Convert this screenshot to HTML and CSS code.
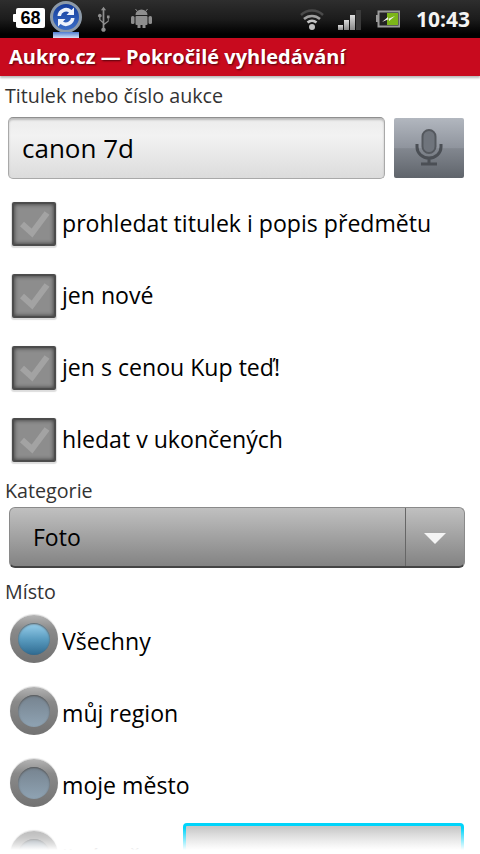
FILE: index.html
```html
<!DOCTYPE html>
<html lang="cs">
<head>
  <meta charset="UTF-8">
  <meta name="viewport" content="width=device-width, initial-scale=1.0">
  <title>Aukro.cz — Pokročilé vyhledávání</title>
  <link rel="stylesheet" href="styles.css">
</head>
<body>

<div class="status">
  <div class="status-left">
    <div class="batt-num">68</div>
    <div class="sync">
      <svg width="36" height="36" viewBox="0 0 36 36">
        <defs>
          <linearGradient id="syncFill" x1="0" y1="0" x2="0" y2="1">
            <stop offset="0" stop-color="#123a9a"/>
            <stop offset="1" stop-color="#3d70c8"/>
          </linearGradient>
        </defs>
        <circle cx="18" cy="17" r="14.500" fill="url(#syncFill)" stroke="#8d9aa8" stroke-width="3"/>
        <path d="M9.500 16a8.500 8.500 0 0 1 14-6l2.500-2.500V15h-7.500l2.500-2.500a5 5 0 0 0-8 3.500z" fill="#eef3fb"/>
        <path d="M26.500 18a8.500 8.500 0 0 1-14 6L10 26.500V19h7.500L15 21.500a5 5 0 0 0 8-3.500z" fill="#eef3fb"/>
      </svg>
      <div class="sync-glow"></div>
    </div>
    <svg class="usb" width="15" height="26" viewBox="0 0 16 30">
      <path d="M8 1l3 4H9v15l4-3v-3h-1v-3h3v3h-1v4l-5 4v3a2.500 2.500 0 1 1-2 0v-5l-4-4v-3a2 2 0 1 1 1.500 0v2.500L7 18V5H5z" fill="#8e8e8e"/>
    </svg>
    <svg class="droid" width="21" height="19" viewBox="0 0 21 19">
      <path d="M4.500 6a6 5.500 0 0 1 12 0z" fill="#8e8e8e"/>
      <path d="M6 2L4.500 0M15 2l1.500-2" stroke="#8e8e8e" stroke-width="1"/>
      <rect x="4.500" y="7" width="12" height="9" rx="1" fill="#8e8e8e"/>
      <rect x="0" y="7" width="3.500" height="8" rx="1.500" fill="#8e8e8e"/>
      <rect x="17.500" y="7" width="3.500" height="8" rx="1.500" fill="#8e8e8e"/>
      <rect x="6.500" y="15" width="3" height="4" fill="#8e8e8e"/>
      <rect x="11.500" y="15" width="3" height="4" fill="#8e8e8e"/>
    </svg>
  </div>
  <div class="status-right">
    <svg class="wifi" width="24" height="22" viewBox="0 0 24 22">
      <path d="M1 7a16 16 0 0 1 22 0" fill="none" stroke="#4a4a4a" stroke-width="2.500"/>
      <path d="M4 11a12 12 0 0 1 16 0" fill="none" stroke="#a0a0a0" stroke-width="2.500"/>
      <path d="M7.500 14.500a7 7 0 0 1 9 0" fill="none" stroke="#c4c4c4" stroke-width="2.500"/>
      <circle cx="12" cy="19" r="3" fill="#c0c0c0"/>
    </svg>
    <div class="bars">
      <i class="b1"></i><i class="b2"></i><i class="b3"></i><i class="b4"></i>
    </div>
    <svg class="charge" width="24" height="18" viewBox="0 0 24 18">
      <rect x="0" y="5" width="2" height="7" fill="#999"/>
      <rect x="2.500" y="1.500" width="21" height="15" fill="#222" stroke="#9a9a9a" stroke-width="2"/>
      <rect x="11" y="3" width="11" height="12" fill="#7cb518"/>
      <path d="M6 12l7-3v2l6-5-7 3V7z" fill="#f2f2f2"/>
    </svg>
    <span class="clock">10:43</span>
  </div>
</div>

<div class="titlebar">Aukro.cz — Pokročilé vyhledávání</div>

<div class="content">
  <div class="label label-first">Titulek nebo číslo aukce</div>
  <div class="search-row">
    <div class="field">canon 7d</div>
    <div class="mic">
      <svg width="30" height="38" viewBox="0 0 30 38">
        <rect x="8.500" y="1" width="13" height="23" rx="6.500" fill="#6f747c" stroke="#54585e" stroke-width="2"/>
        <path d="M3 15v3a12 11 0 0 0 24 0v-3" fill="none" stroke="#4b4f55" stroke-width="3"/>
        <path d="M15 29v5M7 35h16" fill="none" stroke="#4b4f55" stroke-width="3"/>
      </svg>
    </div>
  </div>

  <div class="check-list">
    <div class="check-row">
      <div class="checkbox"><svg width="40" height="40" viewBox="0 0 40 40"><path d="M8 20l10 9L33 9" class="tick"/></svg></div>
      <span>prohledat titulek i popis předmětu</span>
    </div>
    <div class="check-row">
      <div class="checkbox"><svg width="40" height="40" viewBox="0 0 40 40"><path d="M8 20l10 9L33 9" class="tick"/></svg></div>
      <span>jen nové</span>
    </div>
    <div class="check-row">
      <div class="checkbox"><svg width="40" height="40" viewBox="0 0 40 40"><path d="M8 20l10 9L33 9" class="tick"/></svg></div>
      <span>jen s cenou Kup teď!</span>
    </div>
    <div class="check-row">
      <div class="checkbox"><svg width="40" height="40" viewBox="0 0 40 40"><path d="M8 20l10 9L33 9" class="tick"/></svg></div>
      <span>hledat v ukončených</span>
    </div>
  </div>

  <div class="label label-cat">Kategorie</div>
  <div class="spinner">
    <div class="spinner-text">Foto</div>
    <div class="spinner-arrow"><svg width="22" height="11" viewBox="0 0 22 11"><path d="M0 0h22L11 11z" fill="#f4f4f4"/></svg></div>
  </div>

  <div class="label label-place">Místo</div>
  <div class="radio-list">
    <div class="radio-row"><div class="radio radio-on"></div><span>Všechny</span></div>
    <div class="radio-row"><div class="radio"></div><span>můj region</span></div>
    <div class="radio-row"><div class="radio"></div><span>moje město</span></div>
    <div class="radio-row"><div class="radio"></div><span>jiné město</span><div class="city-input"></div></div>
  </div>
</div>

<div class="fade"></div>

</body>
</html>
```

FILE: styles.css
```css
html, body { margin: 0; padding: 0; }
body { width: 480px; height: 854px; overflow: hidden; position: relative; background: #fff; font-family: "Open Sans", "Noto Sans", sans-serif; color: #000; }

.status { height: 38px; display: flex; justify-content: space-between; background: linear-gradient(#2e2e2e, #1c1c1c 50%, #000 90%); }
.status-left { display: flex; align-items: flex-start; padding-left: 16px; }
.status-right { display: flex; align-items: flex-start; padding-right: 10px; }
.batt-num { width: 29px; height: 20px; margin-top: 8px; position: relative; background: #fff; border-radius: 2px; font: bold 18px/20px "Liberation Sans", sans-serif; text-align: center; color: #000; }
.batt-num::before { content: ""; position: absolute; left: -3px; top: 6px; width: 3px; height: 8px; background: #fff; border-radius: 1px 0 0 1px; }
.sync { width: 36px; height: 38px; margin-left: 3px; position: relative; }
.sync svg { display: block; }
.sync-glow { position: absolute; left: 5px; right: 5px; top: 32px; bottom: 0; background: linear-gradient(#4f7cd0, #d5e1f5); }
.usb { margin: 6px 0 0 12px; }
.droid { margin: 9px 0 0 20px; }
.wifi { margin: 8px 0 0 0; }
.bars { display: flex; align-items: flex-end; gap: 1px; height: 20px; margin: 10px 0 0 14px; }
.bars i { display: block; width: 5px; background: linear-gradient(#ddd, #888); }
.bars .b1 { height: 5px; }
.bars .b2 { height: 10px; }
.bars .b3 { height: 15px; }
.bars .b4 { height: 20px; background: #3a3a3a; }
.charge { margin: 10px 0 0 15px; }
.clock { margin-left: 16px; font: bold 21px/38px "Open Sans", sans-serif; color: #f4f4f4; }

.titlebar { height: 38px; padding-left: 9px; background: #c80a1e; color: #fff; font-size: 20px; font-weight: 700; line-height: 38px; text-shadow: 1px 1px 2px rgba(0,0,0,.6); box-shadow: 0 2px 2px #bbb; position: relative; }

.label { padding-left: 5px; font-size: 19.7px; line-height: 28px; color: #333; }
.label-first { margin-top: 6px; }

.search-row { display: flex; margin-top: 7px; padding-left: 8px; }
.field { width: 377px; height: 62px; box-sizing: border-box; padding-left: 13px; border: 1px solid #a9a9a9; border-top-color: #8f8f8f; border-radius: 5px; background: linear-gradient(#ececec, #f2f2f2 30%, #dcdcdc); box-shadow: inset 0 2px 2px #bbb; font-size: 26px; line-height: 60px; }
.mic { width: 70px; height: 60px; margin: 1px 0 0 9px; display: flex; align-items: center; justify-content: center; background: linear-gradient(#b2b7bf, #8f949d 50%, #82878f 51%, #5f646b); border-radius: 2px; }

.check-list { margin-top: 9px; }
.check-row { height: 72px; display: flex; align-items: center; font-size: 23.1px; }
.check-row span { margin-top: -2px; }
.checkbox { width: 44px; height: 44px; margin: 0 6px 0 12px; box-sizing: border-box; display: flex; align-items: center; justify-content: center; background: #8d8d8d; border: 2px solid #4c4c4c; border-radius: 2px; box-shadow: inset 0 0 4px #333, 0 1px 1px 1px #ddd; }
.tick { fill: none; stroke: #a3a3a3; stroke-width: 6; }

.label-cat { margin-top: 1px; }
.spinner { width: 456px; height: 61px; margin: 2px 0 0 9px; display: flex; box-sizing: border-box; border-radius: 6px; border: 1px solid #8a8a8a; border-bottom: 2px solid #444; background: linear-gradient(#c0c0c0, #838383); }
.spinner-text { flex: 1; padding-left: 23px; font-size: 23px; line-height: 59px; }
.spinner-arrow { width: 59px; display: flex; align-items: center; justify-content: center; border-left: 1px solid #666; padding-top: 2px; box-sizing: border-box; }
.label-place { margin-top: 10px; }

.radio-list { margin-top: -3px; }
.radio-row { height: 72px; display: flex; align-items: center; font-size: 23.1px; position: relative; }
.radio-row span { margin-top: 4px; }
.radio { width: 32px; height: 32px; margin: 0 4px 0 10px; border: 8px solid transparent; border-radius: 50%; background: linear-gradient(#76838f, #8fa3b3) padding-box, linear-gradient(#b4b4b4, #8a8a8a 30%, #727272) border-box; box-shadow: 0 -1px 1px #ddd, inset 0 1px 2px #555; flex: none; }
.radio-on { background: linear-gradient(#9ad0ec, #5a9cc0 50%, #2f6a90) padding-box, linear-gradient(#b4b4b4, #8a8a8a 30%, #727272) border-box; }
.city-input { position: absolute; left: 183px; top: 4px; width: 281px; height: 66px; box-sizing: border-box; border: 3px solid #00d4fa; border-radius: 4px; background: linear-gradient(#c8c8c8, #e8e8e8); }

.fade { position: absolute; left: 0; right: 0; bottom: 0; height: 26px; background: linear-gradient(rgba(255,255,255,0), #fff 85%); }
```
